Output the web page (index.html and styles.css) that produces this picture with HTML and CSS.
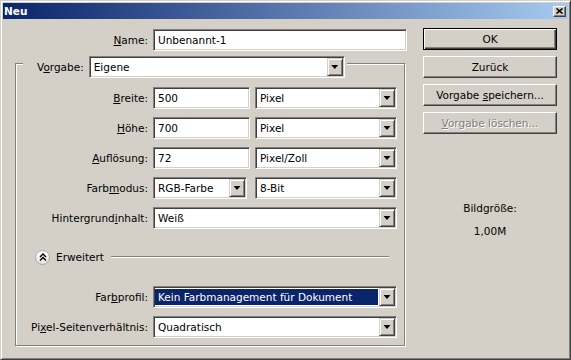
FILE: index.html
```html
<!DOCTYPE html>
<html lang="de">
<head>
<meta charset="UTF-8">
<title>Neu</title>
<link rel="stylesheet" href="styles.css">
</head>
<body>

<div class="window">
  <div class="titlebar">
    <span class="title">Neu</span>
    <span class="close">
      <svg width="7" height="6" viewBox="0 0 7 6"><path d="M0.5 0.5l6 5M6.5 0.5l-6 5" stroke="#000" stroke-width="1.6"/></svg>
    </span>
  </div>

  <div class="dialog">
    <div class="form">
      <div class="row">
        <label class="lbl"><u>N</u>ame:</label>
        <input class="field w-name" type="text" value="Unbenannt-1">
      </div>

      <fieldset class="group">
        <legend class="preset">
          <div class="preset-inner">
            <span class="preset-label">V<u>o</u>rgabe:</span>
            <div class="select w-preset"><span class="val">Eigene</span><span class="arrow"></span></div>
          </div>
        </legend>

        <div class="rows">
          <div class="row">
            <label class="lbl"><u>B</u>reite:</label>
            <input class="field w-num" type="text" value="500">
            <div class="select w-unit"><span class="val">Pixel</span><span class="arrow"></span></div>
          </div>
          <div class="row">
            <label class="lbl"><u>H</u>öhe:</label>
            <input class="field w-num" type="text" value="700">
            <div class="select w-unit"><span class="val">Pixel</span><span class="arrow"></span></div>
          </div>
          <div class="row">
            <label class="lbl"><u>A</u>uflösung:</label>
            <input class="field w-num" type="text" value="72">
            <div class="select w-unit"><span class="val">Pixel/Zoll</span><span class="arrow"></span></div>
          </div>
          <div class="row">
            <label class="lbl">Farb<u>m</u>odus:</label>
            <div class="select w-mode"><span class="val">RGB-Farbe</span><span class="arrow"></span></div>
            <div class="select w-bits"><span class="val">8-Bit</span><span class="arrow"></span></div>
          </div>
          <div class="row">
            <label class="lbl">Hintergrund<u>i</u>nhalt:</label>
            <div class="select w-full"><span class="val">Weiß</span><span class="arrow"></span></div>
          </div>

          <div class="adv">
            <span class="adv-icon">
              <svg width="8" height="8" viewBox="0 0 8 8"><path d="M1 4l3-3 3 3M1 7.5l3-3 3 3" fill="none" stroke="#000" stroke-width="1.4"/></svg>
            </span>
            <span>Erweitert</span>
            <span class="adv-line"></span>
          </div>

          <div class="row">
            <label class="lbl">Far<u>b</u>profil:</label>
            <div class="select w-full focus"><span class="val">Kein Farbmanagement für Dokument</span><span class="arrow"></span></div>
          </div>
          <div class="row">
            <label class="lbl">Pi<u>x</u>el-Seitenverhältnis:</label>
            <div class="select w-full"><span class="val">Quadratisch</span><span class="arrow"></span></div>
          </div>
        </div>
      </fieldset>
    </div>

    <div class="side">
      <button class="btn default">OK</button>
      <button class="btn">Zurück</button>
      <button class="btn">Vorgabe <u>s</u>peichern...</button>
      <button class="btn" disabled><u>V</u>orgabe löschen...</button>

      <div class="info">
        <div>Bildgröße:</div>
        <div>1,00M</div>
      </div>
    </div>
  </div>
</div>

</body>
</html>
```

FILE: styles.css
```css
* {
  box-sizing: border-box;
}
body {
  margin: 0;
  background-color: #d4d0c8;
  font-family: "DejaVu Sans", Tahoma, sans-serif;
  font-size: 10.5px;
  color: #000;
}
u {
  text-decoration: underline;
}
.window {
  width: 571px;
  height: 360px;
  background-color: #d4d0c8;
  border: 1px solid;
  border-color: #d4d0c8 #404040 #404040 #d4d0c8;
  box-shadow: inset 1px 1px #fff, inset -1px -1px #808080;
  padding: 2px;
}
/* Title bar */
.titlebar {
  height: 16px;
  display: flex;
  align-items: center;
  justify-content: space-between;
  padding: 0 2px 0 1px;
  background: linear-gradient(to right, #0a246a, #a6caf0);
  color: #fff;
  font-weight: bold;
}
.close {
  width: 13px;
  height: 11px;
  display: flex;
  align-items: center;
  justify-content: center;
  background-color: #d4d0c8;
  border: 1px solid;
  border-color: #fff #404040 #404040 #fff;
  box-shadow: inset -1px -1px #808080;
}
.dialog {
  display: flex;
  padding-top: 9px;
}
.form {
  width: 392px;
  margin-left: 12px;
  padding-top: 1px;
}
.row {
  display: flex;
  align-items: center;
  gap: 5px;
  height: 22px;
}
.lbl {
  width: 133px;
  text-align: right;
  white-space: nowrap;
}
/* Group box */
.group {
  width: 390px;
  min-width: 0;
  margin: -2px 0 0 0;
  padding: 9px 0 7px;
  border: 1px solid #808080;
  box-shadow: inset 1px 1px #fff, 1px 1px #fff;
}
.group .lbl {
  width: 132px;
}
.preset {
  margin-left: 7px;
  padding: 7px 2px 0 0;
  background-color: #d4d0c8;
}
.preset-inner {
  display: flex;
  align-items: center;
  gap: 5px;
}
.preset-label {
  padding-left: 14px;
}
.rows {
  display: flex;
  flex-direction: column;
  gap: 8px;
}
/* Fields */
.field,
.select {
  height: 22px;
  background-color: #fff;
  border: 1px solid;
  border-color: #808080 #fff #fff #808080;
  box-shadow: inset 1px 1px #404040, inset -1px -1px #d4d0c8;
}
.field {
  padding: 1px 1px 1px 4px;
  font: inherit;
  color: #000;
  outline: none;
}
.select {
  display: flex;
  padding: 1px;
}
.val {
  flex: 1;
  padding-left: 3px;
  line-height: 18px;
  white-space: nowrap;
  overflow: hidden;
}
.select.focus .val {
  margin: 1px 1px 1px 0;
  padding-left: 3px;
  line-height: 16px;
  background-color: #0a246a;
  color: #fff;
}
.arrow {
  width: 16px;
  height: 18px;
  display: flex;
  align-items: center;
  justify-content: center;
  background-color: #d4d0c8;
  border: 1px solid;
  border-color: #d4d0c8 #404040 #404040 #d4d0c8;
  box-shadow: inset 1px 1px #fff, inset -1px -1px #808080;
}
.arrow::after {
  content: "";
  width: 7px;
  height: 4px;
  background-color: #000;
  clip-path: polygon(0 0, 100% 0, 50% 100%);
}
.w-name { width: 254px; }
.w-preset { width: 256px; }
.w-num { width: 97px; }
.w-unit { width: 142px; }
.w-mode { width: 94px; }
.w-bits { width: 142px; margin-left: 3px; }
.w-full { width: 244px; }
/* Erweitert */
.adv {
  display: flex;
  align-items: center;
  gap: 6px;
  height: 22px;
  margin: 9px 15px 10px 0;
  padding-left: 19px;
}
.adv-icon {
  width: 15px;
  height: 15px;
  display: flex;
  align-items: center;
  justify-content: center;
  border-radius: 50%;
  border: 1px solid #a8a8a8;
  background: linear-gradient(#fff, #e4e2dc);
}
.adv-line {
  flex: 1;
  height: 2px;
  margin-left: 1px;
  border-top: 1px solid #808080;
  border-bottom: 1px solid #fff;
}
/* Buttons */
.side {
  width: 134px;
  margin-left: 16px;
  display: flex;
  flex-direction: column;
  gap: 6px;
}
.btn {
  height: 22px;
  padding: 0;
  font: inherit;
  color: #000;
  background-color: #d4d0c8;
  border: 1px solid;
  border-color: #fff #404040 #404040 #fff;
  box-shadow: inset -1px -1px #808080;
}
.btn.default {
  border-color: #000;
  box-shadow: inset 1px 1px #fff, inset -1px -1px #404040, inset -2px -2px #808080;
}
.btn:disabled {
  color: #808080;
  text-shadow: 1px 1px #fff;
}
.info {
  margin-top: 62px;
  display: flex;
  flex-direction: column;
  gap: 10px;
  text-align: center;
  line-height: 13px;
}
```
